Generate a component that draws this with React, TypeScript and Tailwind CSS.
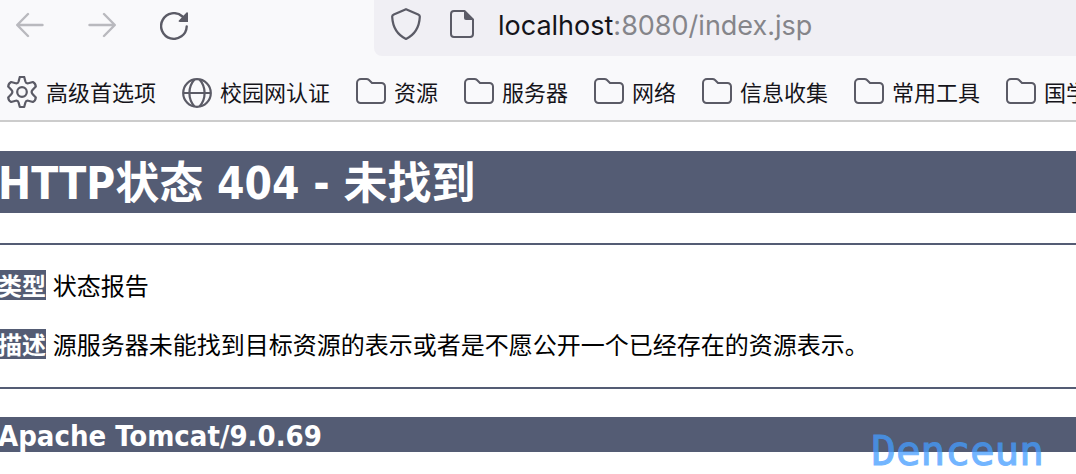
import React from "react";

function BackIcon() {
  return (
    <svg className="h-7 w-7" viewBox="0 0 28 28" fill="none" stroke="currentColor" strokeWidth="2.4" strokeLinecap="round" strokeLinejoin="round">
      <path d="M26.500 13H1.500M12 2 1.200 13 12 24" />
    </svg>
  );
}

function ForwardIcon() {
  return (
    <svg className="h-7 w-7" viewBox="0 0 28 28" fill="none" stroke="currentColor" strokeWidth="2.4" strokeLinecap="round" strokeLinejoin="round">
      <path d="M1.500 13h25M16 2l10.800 11L16 24" />
    </svg>
  );
}

function ReloadIcon() {
  return (
    <svg className="h-7 w-7" viewBox="0 0 28 28" fill="none">
      <path d="M26.700 14.500A12.800 12.800 0 1 1 22.500 4.500" stroke="currentColor" strokeWidth="2.400" strokeLinecap="round" />
      <path d="M28 1.200V10H19.600c-.9 0-1.300-1-.7-1.600l7.600-7.800c.6-.6 1.500-.2 1.500.6Z" fill="currentColor" />
    </svg>
  );
}

function ShieldIcon() {
  return (
    <svg className="h-8 w-[30px]" viewBox="0 0 30 32" fill="none" stroke="currentColor" strokeWidth="2.2" strokeLinejoin="round">
      <path d="M15 1.200 27.200 6.400c1.100.5 1.700 1.400 1.600 2.500C28.300 19 23.500 26.800 15 31 6.500 26.800 1.700 19 1.200 8.900c-.1-1.100.5-2 1.600-2.500L15 1.200Z" />
    </svg>
  );
}

function PageIcon() {
  return (
    <svg className="h-7 w-6" viewBox="0 0 24 28" fill="none">
      <path d="M14.500 1H4a3 3 0 0 0-3 3v20a3 3 0 0 0 3 3h16a3 3 0 0 0 3-3V9.500L14.500 1Z" stroke="currentColor" strokeWidth="2" strokeLinejoin="round" />
      <path d="M14 1v7a2 2 0 0 0 2 2h7.500L14 1Z" fill="currentColor" />
    </svg>
  );
}

function GearIcon() {
  return (
    <svg className="h-[34px] w-8" viewBox="0 0 32 34" fill="none" stroke="currentColor" strokeWidth="2.2" strokeLinejoin="round">
      <path d="M13.800 1h4.400l1.200 4.500c.4 1.300 1.600 2 2.900 1.700l4.600-1.200c1.600.8 2.700 2.600 2.900 4.400l-3.300 3.700c-.9 1-.9 2.800 0 3.800l3.300 3.700c-.2 1.800-1.300 3.600-2.900 4.400l-4.600-1.200c-1.300-.3-2.500.4-2.900 1.700L18.200 31h-4.400l-1.200-4.500c-.4-1.300-1.600-2-2.900-1.700L5.100 26c-1.600-.8-2.700-2.600-2.900-4.400l3.300-3.700c.9-1 .9-2.800 0-3.800l-3.300-3.700C2.400 8.600 3.500 6.800 5.100 6l4.600 1.200c1.300.3 2.500-.4 2.900-1.700L13.800 1Z" />
      <circle cx="16" cy="16" r="4.800" />
    </svg>
  );
}

function GlobeIcon() {
  return (
    <svg className="h-[30px] w-[30px]" viewBox="0 0 30 30" fill="none" stroke="currentColor" strokeWidth="2.2">
      <circle cx="15" cy="15" r="13.800" />
      <path d="M1 15h28M12.500 1.500C5.700 9 5.700 21 12.500 28.500M17.500 1.500C24.300 9 24.300 21 17.500 28.500" />
    </svg>
  );
}

function FolderIcon() {
  return (
    <svg className="h-[30px] w-[30px]" viewBox="0 0 30 30" fill="none" stroke="currentColor" strokeWidth="2" strokeLinejoin="round">
      <path d="M1 5a4 4 0 0 1 4-4h5.500c1 0 1.800.3 2.500 1l3 3h9.500A3.500 3.500 0 0 1 29 8.500v13a3.500 3.500 0 0 1-3.500 3.500h-21A3.500 3.500 0 0 1 1 21.500V5Z" />
    </svg>
  );
}

const bookmarks = [
  { name: "高级首选项", icon: GearIcon },
  { name: "校园网认证", icon: GlobeIcon },
  { name: "资源", icon: FolderIcon },
  { name: "服务器", icon: FolderIcon },
  { name: "网络", icon: FolderIcon },
  { name: "信息收集", icon: FolderIcon },
  { name: "常用工具", icon: FolderIcon },
  { name: "国学", icon: FolderIcon },
];

export default function App() {
  return (
    <div className="relative overflow-hidden bg-white pb-5 font-['DejaVu_Sans_Condensed','Noto_Sans_CJK_SC',sans-serif]">
      <header className="border-b-2 border-[#cccccc] bg-[#f9f9fb] font-['Inter','Noto_Sans_CJK_SC',sans-serif] text-[#5b5b66]">
        <div className="flex pl-4">
          <div className="flex h-[52px] shrink-0 items-center gap-11">
            <button type="button" aria-label="后退" disabled className="text-[#b9b9be]">
              <BackIcon />
            </button>
            <button type="button" aria-label="前进" disabled className="text-[#b9b9be]">
              <ForwardIcon />
            </button>
            <button type="button" aria-label="重新加载">
              <ReloadIcon />
            </button>
          </div>
          <div className="ml-[186px] flex h-14 flex-1 items-center rounded-bl-lg bg-[#f0eff4] pb-2 pl-[17px]">
            <ShieldIcon />
            <span className="ml-[29px]">
              <PageIcon />
            </span>
            <div role="textbox" aria-label="网址" className="ml-6 whitespace-nowrap pt-1 text-[27px] leading-8 text-[#85858a]">
              <span className="text-[#15141a]">localhost</span>:8080/index.jsp
            </div>
          </div>
        </div>
        <nav className="flex h-16 items-center gap-[26px] overflow-hidden pl-1.5 pt-2.5">
          {bookmarks.map(({ name, icon: Icon }) => (
            <a key={name} href="#" className="flex shrink-0 items-center gap-2">
              <Icon />
              <span className="whitespace-nowrap text-[22px] leading-8 text-[#15141a]">{name}</span>
            </a>
          ))}
        </nav>
      </header>

      <main className="-ml-0.5 pt-[29px] text-2xl text-black">
        <h1 className="bg-[#545c74] pt-1 text-[44px] font-bold leading-[58px] text-white">HTTP状态 404 - 未找到</h1>
        <hr className="mt-[30px] border-t-2 border-[#545c74]" />
        <p className="mt-[25px] leading-[26px]">
          <b className="inline-block bg-[#545c74] pt-1 text-white">类型</b> 状态报告
        </p>
        <p className="mt-[29px] leading-[26px]">
          <b className="inline-block bg-[#545c74] pt-1 text-white">描述</b> 源服务器未能找到目标资源的表示或者是不愿公开一个已经存在的资源表示。
        </p>
        <hr className="mt-7 border-t-2 border-[#545c74]" />
        <h3 className="mt-7 bg-[#545c74] pt-1 text-[29px] font-bold leading-[31px] text-white">Apache Tomcat/9.0.69</h3>
      </main>

      <div className="absolute bottom-0 right-8 font-['DejaVu_Sans_Mono',monospace] text-[41px] leading-[42px] text-[#449dff] opacity-75 [-webkit-text-stroke:1px_#449dff]">
        Denceun
      </div>
    </div>
  );
}
